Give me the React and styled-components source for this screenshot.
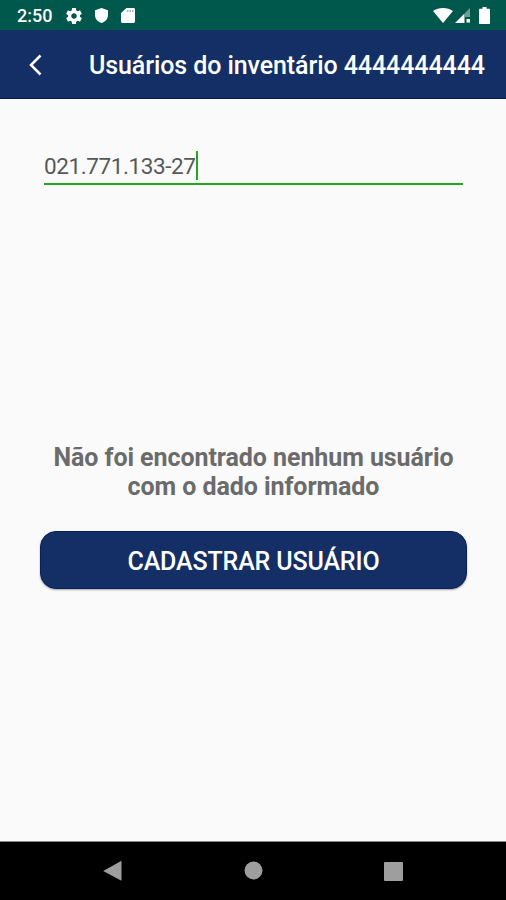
import React, { useState } from "react";
import styled, { createGlobalStyle } from "styled-components";

const GlobalStyle = createGlobalStyle`
  * {
    box-sizing: border-box;
  }

  body {
    margin: 0;
    background-color: #fafafa;
    font-family: Roboto, "Liberation Sans", sans-serif;
  }
`;

const Screen = styled.div`
  display: flex;
  flex-direction: column;
  width: 506px;
  height: 900px;
  background-color: #fafafa;
  overflow: hidden;
`;

const StatusBar = styled.div`
  display: flex;
  align-items: center;
  justify-content: space-between;
  flex: none;
  height: 30px;
  padding: 1px 16px 0 17px;
  background-color: #00574b;
  color: #fff;
`;

const StatusGroup = styled.div`
  display: flex;
  align-items: center;
  gap: ${(props) => props.$gap || 0}px;
`;

const Clock = styled.span`
  width: 49px;
  font-size: 18px;
  font-weight: 500;
  line-height: 28px;
`;

const Icon = styled.svg`
  display: block;
  flex: none;
  fill: ${(props) => props.$color || "#fff"};
`;

const Header = styled.header`
  display: flex;
  align-items: center;
  flex: none;
  height: 69px;
  padding-left: 26px;
  background-color: #142f66;
  border-bottom: 1px solid #0b1550;
`;

const BackButton = styled.button`
  display: flex;
  width: 63px;
  padding: 1px 0 0;
  border: none;
  background: none;
  cursor: pointer;
`;

const Title = styled.h1`
  margin: 0;
  padding-top: 4px;
  color: #fff;
  font-size: 25px;
  font-weight: 500;
  letter-spacing: -0.09px;
  line-height: 30px;
  white-space: nowrap;
`;

const Content = styled.main`
  display: flex;
  flex-direction: column;
  flex: 1;
  padding: 51px 39px 0 40px;
`;

const Field = styled.div`
  display: flex;
  align-items: center;
  height: 35px;
  margin: 0 4px;
  padding-bottom: 2px;
  border-bottom: 2px solid #22a722;
`;

const Value = styled.span`
  color: #585858;
  font-size: 22.5px;
  font-weight: 400;
  letter-spacing: -0.4px;
  line-height: 30px;
`;

const Caret = styled.span`
  width: 2px;
  height: 29px;
  background-color: #22a722;
`;

const Message = styled.p`
  margin: 258px 0 0;
  color: #6b6b6b;
  font-size: 25px;
  font-weight: 700;
  letter-spacing: -0.07px;
  line-height: 29px;
  text-align: center;
`;

const Button = styled.button`
  height: 58px;
  margin-top: 30px;
  padding: 3px 0 0;
  border: 1px solid #0e1f58;
  border-radius: 16px;
  background-color: #142f66;
  box-shadow: 0 1px 2px rgba(0, 0, 0, 0.35);
  color: #fff;
  font-family: inherit;
  font-size: 25px;
  font-weight: 500;
  letter-spacing: -0.14px;
  cursor: pointer;
`;

const NavBar = styled.nav`
  display: flex;
  align-items: center;
  justify-content: space-between;
  flex: none;
  height: 59px;
  padding: 0 102px;
  border-top: 1px solid #8a8a8a;
  background-color: #000;
`;

const App = () => {
  const [cpf] = useState("021.771.133-27");

  return (
    <Screen>
      <GlobalStyle />
      <StatusBar>
        <StatusGroup>
          <Clock>2:50</Clock>
          <StatusGroup $gap={13}>
            <Icon width="16" height="16" viewBox="2 2 20 20">
              <path d="M19.43 12.98c.04-.32.07-.64.07-.98s-.03-.66-.07-.98l2.11-1.65c.19-.15.24-.42.12-.64l-2-3.46c-.12-.22-.39-.3-.61-.22l-2.49 1c-.52-.4-1.08-.73-1.69-.98l-.38-2.65C14.46 2.18 14.25 2 14 2h-4c-.25 0-.46.18-.49.42l-.38 2.65c-.61.25-1.17.59-1.69.98l-2.49-1c-.23-.09-.49 0-.61.22l-2 3.46c-.13.22-.07.49.12.64l2.11 1.65c-.04.32-.07.65-.07.98s.03.66.07.98l-2.11 1.65c-.19.15-.24.42-.12.64l2 3.46c.12.22.39.3.61.22l2.49-1c.52.4 1.08.73 1.69.98l.38 2.65c.03.24.24.42.49.42h4c.25 0 .46-.18.49-.42l.38-2.65c.61-.25 1.17-.59 1.69-.98l2.49 1c.23.09.49 0 .61-.22l2-3.46c.12-.22.07-.49-.12-.64l-2.11-1.65zM12 15.5c-1.93 0-3.5-1.57-3.5-3.5s1.57-3.5 3.5-3.5 3.5 1.57 3.5 3.5-1.57 3.5-3.5 3.5z" />
            </Icon>
            <Icon width="13" height="15" viewBox="0 0 13 15">
              <path d="M6.5 0 13 2.3V7c0 3.7-2.7 7-6.5 8C2.7 14 0 10.7 0 7V2.3z" />
            </Icon>
            <Icon width="14" height="15" viewBox="0 0 14 15">
              <path d="M5.5 0h7C13.3 0 14 .7 14 1.5v12c0 .8-.7 1.5-1.5 1.5h-11C.7 15 0 14.3 0 13.5V5z" />
              <path fill="#9dbcb6" d="M6 2h1.5v2H6zM8.5 2H10v2H8.5zM11 2h1.5v2H11z" />
            </Icon>
          </StatusGroup>
        </StatusGroup>
        <StatusGroup>
          <Icon width="22" height="15" viewBox="0 0 22 15">
            <path d="M0 3C5.5-1 14.500-1 20 3L10 15z" />
          </Icon>
          <Icon width="24" height="15" viewBox="0 0 24 15">
            <path fill="#6f9d94" d="M15 0v9h-5V5z" />
            <path d="M0 15 9.5 5.5V15zM11.5 11H15v3.500h-3.500z" />
          </Icon>
          <Icon width="11" height="17" viewBox="0 0 11 17">
            <path d="M3.5 0h4v1.700H10c.6 0 1 .4 1 1V16c0 .6-.4 1-1 1H1c-.6 0-1-.4-1-1V2.700c0-.6.4-1 1-1h2.500z" />
          </Icon>
        </StatusGroup>
      </StatusBar>

      <Header>
        <BackButton aria-label="Voltar">
          <Icon width="18" height="24" viewBox="0 0 18 24">
            <path d="M14.5 2.500 5 12l9.500 9.500" fill="none" stroke="#fff" strokeWidth="2.5" />
          </Icon>
        </BackButton>
        <Title>Usuários do inventário 4444444444</Title>
      </Header>

      <Content>
        <Field>
          <Value>{cpf}</Value>
          <Caret />
        </Field>
        <Message>
          Não foi encontrado nenhum usuário
          <br />
          com o dado informado
        </Message>
        <Button>CADASTRAR USUÁRIO</Button>
      </Content>

      <NavBar>
        <Icon width="20" height="22" viewBox="0 0 20 22" $color="#9e9e9e">
          <path d="M19.5.8v20L1.200 11z" />
        </Icon>
        <Icon width="20" height="20" viewBox="0 0 20 20" $color="#9e9e9e">
          <circle cx="10.5" cy="9.5" r="9" />
        </Icon>
        <Icon width="20" height="20" viewBox="0 0 20 20" $color="#9e9e9e">
          <rect y="1" width="19" height="19" rx="1" />
        </Icon>
      </NavBar>
    </Screen>
  );
};

export default App;
